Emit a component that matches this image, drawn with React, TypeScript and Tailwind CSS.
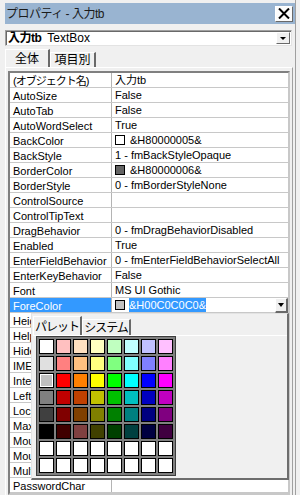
import type { ReactNode } from "react";

const FONT = "font-['Liberation_Sans','Noto_Sans_CJK_JP',sans-serif]";

const palette = [
  "bg-[#ffffff]", "bg-[#ffc0c0]", "bg-[#ffe0c0]", "bg-[#ffffc0]", "bg-[#c0ffc0]", "bg-[#c0ffff]", "bg-[#c0c0ff]", "bg-[#ffc0ff]",
  "bg-[#e0e0e0]", "bg-[#ff8080]", "bg-[#ffc080]", "bg-[#ffff80]", "bg-[#80ff80]", "bg-[#80ffff]", "bg-[#8080ff]", "bg-[#ff80ff]",
  "bg-[#c0c0c0]", "bg-[#ff0000]", "bg-[#ff8000]", "bg-[#ffff00]", "bg-[#00ff00]", "bg-[#00ffff]", "bg-[#0000ff]", "bg-[#ff00ff]",
  "bg-[#808080]", "bg-[#c00000]", "bg-[#c04000]", "bg-[#c0c000]", "bg-[#00c000]", "bg-[#00c0c0]", "bg-[#0000c0]", "bg-[#c000c0]",
  "bg-[#404040]", "bg-[#800000]", "bg-[#804000]", "bg-[#808000]", "bg-[#008000]", "bg-[#008080]", "bg-[#000080]", "bg-[#800080]",
  "bg-[#000000]", "bg-[#400000]", "bg-[#804040]", "bg-[#404000]", "bg-[#004000]", "bg-[#004040]", "bg-[#000040]", "bg-[#400040]",
  "bg-white", "bg-white", "bg-white", "bg-white", "bg-white", "bg-white", "bg-white", "bg-white",
  "bg-white", "bg-white", "bg-white", "bg-white", "bg-white", "bg-white", "bg-white", "bg-white",
];

function Swatch({ color }: { color: string }) {
  return <span className={`inline-block w-[10px] h-[10px] border border-black mr-[5px] shrink-0 ${color}`} />;
}

// values of the rows under the palette popup are hidden, so they are left empty
const rows: [string, ReactNode][] = [
  ["(オブジェクト名)", "入力tb"],
  ["AutoSize", "False"],
  ["AutoTab", "False"],
  ["AutoWordSelect", "True"],
  ["BackColor", <><Swatch color="bg-white" />&amp;H80000005&amp;</>],
  ["BackStyle", "1 - fmBackStyleOpaque"],
  ["BorderColor", <><Swatch color="bg-[#646464]" />&amp;H80000006&amp;</>],
  ["BorderStyle", "0 - fmBorderStyleNone"],
  ["ControlSource", ""],
  ["ControlTipText", ""],
  ["DragBehavior", "0 - fmDragBehaviorDisabled"],
  ["Enabled", "True"],
  ["EnterFieldBehavior", "0 - fmEnterFieldBehaviorSelectAll"],
  ["EnterKeyBehavior", "False"],
  ["Font", "MS UI Gothic"],
  ["ForeColor", null],
  ["Height", ""],
  ["HelpContextID", ""],
  ["HideSelection", ""],
  ["IMEMode", ""],
  ["IntegralHeight", ""],
  ["Left", ""],
  ["Locked", ""],
  ["MaxLength", ""],
  ["MouseIcon", ""],
  ["MousePointer", ""],
  ["MultiLine", ""],
  ["PasswordChar", ""],
];

function Row({ name, value }: { name: string; value: ReactNode }) {
  const selected = name === "ForeColor";
  return (
    <div className="flex h-[15px] border-b border-[#c8c8c8] text-[11px]">
      <div
        className={`w-[102px] shrink-0 border-r border-[#b4b4b4] pl-[3px] leading-[16px] overflow-hidden whitespace-nowrap ${
          selected ? "bg-[#3399ff] text-white" : ""
        } ${name.startsWith("(") ? "tracking-[-1px]" : ""}`}
      >
        {name}
      </div>
      {selected ? (
        <div className="flex flex-1 min-w-0 items-center pl-[3px] bg-white">
          <Swatch color="bg-[#c0c0c0]" />
          <span className="bg-[#3399ff] text-white leading-[13px] pt-[1px] -ml-[1px]">&amp;H00C0C0C0&amp;</span>
          <div className="flex-1" />
          <div className="flex h-[15px] w-[13px] items-center justify-center self-start bg-[#f0f0f0] border-t border-l border-t-white border-l-white border-r-2 border-b-2 border-r-[#696969] border-b-[#696969]">
            <span className="block w-0 h-0 border-l-[3.5px] border-r-[3.5px] border-t-[4px] border-l-transparent border-r-transparent border-t-black" />
          </div>
        </div>
      ) : (
        <div className="flex flex-1 min-w-0 items-center pl-[3px] leading-[16px] overflow-hidden whitespace-nowrap">
          {value}
        </div>
      )}
    </div>
  );
}

export default function App() {
  return (
    <div
      className={`relative w-[300px] h-[495px] overflow-hidden bg-[#f0f0f0] text-black ${FONT} shadow-[inset_-4px_0_0_#f0f0f0,inset_-5px_0_0_#a0a0a0]`}
    >
      <div className="flex flex-col pt-[3px] pl-[5px]">
        {/* title bar */}
        <div className="flex h-[21px] w-[290px] items-center justify-between bg-[#99b4d1] pl-[1px] pr-[2px]">
          <span className="text-[12px] leading-none text-[#1b1b1b] tracking-[-0.5px]">プロパティ - 入力tb</span>
          <div className="flex h-[16px] w-[18px] items-center justify-center bg-[#fbfbfb] border border-t-white border-l-white border-r-[#696969] border-b-[#696969]">
            <svg width="12" height="11" viewBox="0 0 12 11">
              <path d="M1 0.5 L11 10.5 M11 0.5 L1 10.5" stroke="black" strokeWidth="2" />
            </svg>
          </div>
        </div>

        {/* object combo */}
        <div className="mt-[6px] flex h-[16px] w-[287px] items-center bg-white border border-t-[#a0a0a0] border-l-[#a0a0a0] border-r-[#e3e3e3] border-b-[#e3e3e3] shadow-[inset_1px_1px_0_#696969] pl-[2px] pr-[1px]">
          <span className="text-[12px] font-bold tracking-[-0.5px]">入力tb</span>
          <span className="ml-[6px] text-[12px]">TextBox</span>
          <div className="flex-1" />
          <div className="flex h-[12px] w-[14px] items-end justify-center pb-[3px] bg-[#f0f0f0] border border-t-white border-l-white border-r-[#696969] border-b-[#696969]">
            <span className="block w-0 h-0 border-l-[3px] border-r-[3px] border-t-[3px] border-l-transparent border-r-transparent border-t-black" />
          </div>
        </div>

        {/* tabs */}
        <div className="mt-[3px] flex h-[18px] items-end text-[12px]">
          <div className="flex h-[18px] w-[45px] items-center justify-center border-t border-l border-t-white border-l-white border-r-2 border-r-[#696969] pt-[1px]">
            全体
          </div>
          <div className="flex h-[15px] w-[46px] items-center justify-center border-t border-l border-t-white border-l-white border-r-2 border-r-[#696969]">
            項目別
          </div>
        </div>

        {/* property grid */}
        <div className="w-[288px] border-t border-l border-t-white border-l-white border-r border-r-[#a0a0a0] pt-[3px] pl-[2px] pr-[2px] h-[440px]">
          <div className="w-[282px] border-2 border-t-[#808080] border-l-[#808080] border-r-[#c8c8c8] border-b-[#c8c8c8] bg-white">
            {rows.map(([n, v]) => (
              <Row key={n} name={n} value={v} />
            ))}
          </div>
        </div>
      </div>

      {/* color palette dropdown */}
      <div className="absolute left-[31px] top-[313px] flex h-[167px] w-[258px] flex-col bg-[#f0f0f0] border-t border-l border-t-[#e3e3e3] border-l-[#e3e3e3] border-r-2 border-b-2 border-r-[#6d6d6d] border-b-[#6d6d6d] pl-[1px] pt-[2px]">
        <div className="flex h-[19px] items-end text-[12px] tracking-[-1px]">
          <div className="flex h-[19px] w-[49px] items-center justify-center border-t border-l border-t-white border-l-white border-r-2 border-r-[#696969] pt-[1px]">
            パレット
          </div>
          <div className="flex h-[16px] w-[49px] items-center justify-center border-t border-l border-t-white border-l-white border-r-2 border-r-[#696969]">
            システム
          </div>
        </div>
        <div className="flex-1 border-t border-white pl-[3px]">
          <div className="grid w-[140px] grid-cols-8 gap-[2px] bg-[#808080] border border-[#3c3c3c] p-[2px]">
            {palette.map((c, i) => (
              <div
                key={i}
                className={`h-[15px] w-[15px] border border-black ${c} ${
                  i === 16 ? "shadow-[inset_0_0_0_1px_white]" : ""
                }`}
              />
            ))}
          </div>
        </div>
      </div>
    </div>
  );
}
